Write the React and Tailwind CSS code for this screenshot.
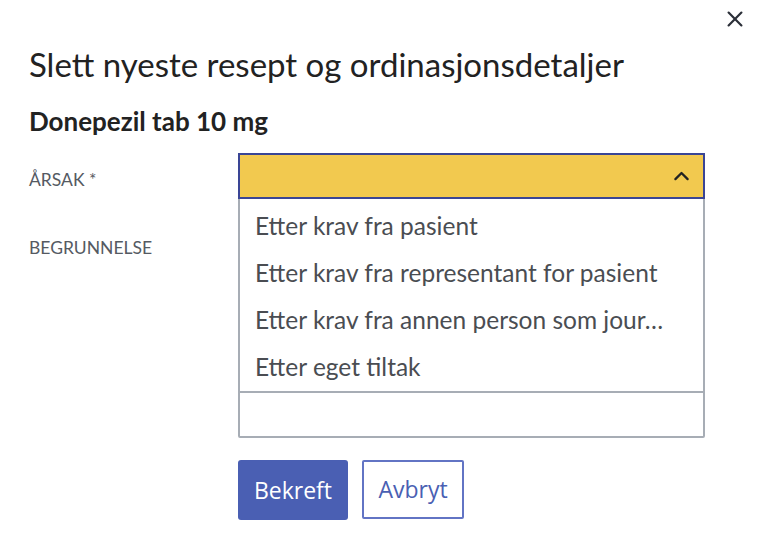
import React from "react";

const options = [
  "Etter krav fra pasient",
  "Etter krav fra representant for pasient",
  "Etter krav fra annen person som jour…",
  "Etter eget tiltak",
];

export default function App() {
  return (
    <div className="relative w-[768px] h-[551px] bg-white overflow-hidden font-['Lato',sans-serif] text-[#222]">
      <button className="absolute top-[8px] right-[22px] w-[22px] h-[22px] flex items-center justify-center text-[#2b2f38]" aria-label="Lukk">
        <svg viewBox="0 0 24 24" className="w-[22px] h-[22px]" fill="none" stroke="currentColor" strokeWidth={2.4} strokeLinecap="round">
          <path d="M5 5l14 14M19 5L5 19" />
        </svg>
      </button>

      <div className="pl-[29px] pt-[44px]">
        <h1 className="text-[33px] leading-[40px] font-normal text-[#222]">Slett nyeste resept og ordinasjonsdetaljer</h1>
        <h2 className="mt-[21px] text-[26px] leading-[32px] font-bold text-[#222]">Donepezil tab 10 mg</h2>

        <div className="mt-[16px] grid grid-cols-[209px_467px]">
          <label className="pt-[17px] text-[17.5px] leading-[20px] text-[#555a62]">ÅRSAK *</label>
          <div className="relative z-10">
            <div className="h-[46px] bg-[#f2c94f] border-2 border-[#3a4595] flex items-center justify-end pr-[11px]">
              <svg viewBox="0 0 24 24" className="w-[21px] h-[21px]" fill="none" stroke="#222" strokeWidth={2.6} strokeLinecap="round" strokeLinejoin="round">
                <path d="M5 15l7-7 7 7" />
              </svg>
            </div>
            <ul className="absolute top-full left-0 right-0 bg-white border-x-2 border-b-2 border-[#a7adb5] pt-[4px]">
              {options.map((o) => (
                <li key={o} className="h-[47px] flex items-center pl-[15px] pr-[10px] text-[24.5px] text-[#4a4d52] whitespace-nowrap">
                  {o}
                </li>
              ))}
            </ul>
          </div>

          <label className="mt-[39px] text-[17.5px] leading-[20px] text-[#555a62]">BEGRUNNELSE</label>
          <div className="mt-[31px] h-[208px] border-2 border-[#a7adb5] rounded-[2px] bg-white" />

          <div />
          <div className="mt-[22px] flex gap-[14px]">
            <button className="w-[110px] h-[60px] rounded-[3px] bg-[#4a5fb3] text-white text-[23px] font-['Open_Sans',sans-serif]">Bekreft</button>
            <button className="w-[102px] h-[59px] rounded-[2px] border-2 border-[#6274c4] bg-white text-[#4a5fb3] text-[23px] font-['Open_Sans',sans-serif]">Avbryt</button>
          </div>
        </div>
      </div>
    </div>
  );
}
